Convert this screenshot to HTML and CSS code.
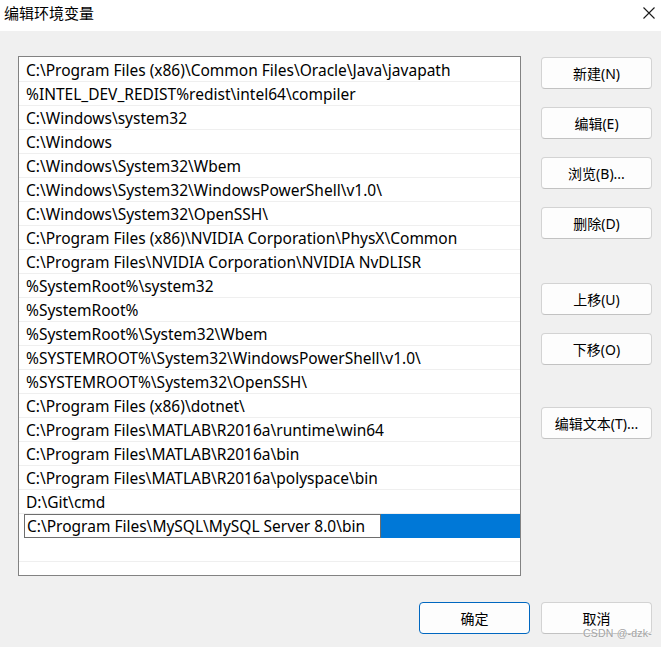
FILE: index.html
```html
<!DOCTYPE html>
<html lang="zh-CN">
<head>
    <meta charset="UTF-8">
    <meta name="viewport" content="width=device-width, initial-scale=1.0">
    <title>编辑环境变量</title>
    <link rel="stylesheet" href="styles.css">
</head>
<body>
    <div class="window">
        <div class="titlebar">
            <span class="title">编辑环境变量</span>
            <svg class="close" width="12" height="12" viewBox="0 0 12 12">
                <path d="M0.5 0.5 L11.5 11.5 M11.5 0.5 L0.5 11.5" stroke="#1a1a1a" stroke-width="1.1" fill="none"/>
            </svg>
        </div>
        <div class="dialog">
            <div class="main">
                <div class="listbox">
                    <div class="row">C:\Program Files (x86)\Common Files\Oracle\Java\javapath</div>
                    <div class="row">%INTEL_DEV_REDIST%redist\intel64\compiler</div>
                    <div class="row">C:\Windows\system32</div>
                    <div class="row">C:\Windows</div>
                    <div class="row">C:\Windows\System32\Wbem</div>
                    <div class="row">C:\Windows\System32\WindowsPowerShell\v1.0\</div>
                    <div class="row">C:\Windows\System32\OpenSSH\</div>
                    <div class="row">C:\Program Files (x86)\NVIDIA Corporation\PhysX\Common</div>
                    <div class="row">C:\Program Files\NVIDIA Corporation\NVIDIA NvDLISR</div>
                    <div class="row">%SystemRoot%\system32</div>
                    <div class="row">%SystemRoot%</div>
                    <div class="row">%SystemRoot%\System32\Wbem</div>
                    <div class="row">%SYSTEMROOT%\System32\WindowsPowerShell\v1.0\</div>
                    <div class="row">%SYSTEMROOT%\System32\OpenSSH\</div>
                    <div class="row">C:\Program Files (x86)\dotnet\</div>
                    <div class="row">C:\Program Files\MATLAB\R2016a\runtime\win64</div>
                    <div class="row">C:\Program Files\MATLAB\R2016a\bin</div>
                    <div class="row">C:\Program Files\MATLAB\R2016a\polyspace\bin</div>
                    <div class="row">D:\Git\cmd</div>
                    <div class="row selected">
                        <div class="edit">C:\Program Files\MySQL\MySQL Server 8.0\bin</div>
                        <div class="highlight"></div>
                    </div>
                    <div class="row"></div>
                </div>
                <div class="side-buttons">
                    <button class="btn">新建(N)</button>
                    <button class="btn">编辑(E)</button>
                    <button class="btn">浏览(B)...</button>
                    <button class="btn">删除(D)</button>
                    <button class="btn group-start">上移(U)</button>
                    <button class="btn">下移(O)</button>
                    <button class="btn text-edit">编辑文本(T)...</button>
                </div>
            </div>
            <div class="footer">
                <button class="btn default">确定</button>
                <button class="btn">取消</button>
            </div>
            <span class="watermark">CSDN @-dzk-</span>
        </div>
    </div>
</body>
</html>
```

FILE: styles.css
```css
* {
    box-sizing: border-box;
    margin: 0;
    padding: 0;
}

body {
    width: 661px;
    height: 647px;
    overflow: hidden;
    font-family: "Noto Sans", "Noto Sans CJK SC", sans-serif;
    color: #000;
}

.window {
    width: 661px;
    height: 647px;
    display: flex;
    flex-direction: column;
}

.titlebar {
    height: 31px;
    display: flex;
    justify-content: space-between;
    align-items: flex-start;
    background-color: #fff;
}

.title {
    padding: 3px 0 0 4px;
    font-family: "Noto Sans CJK SC", sans-serif;
    font-size: 15px;
    line-height: 20px;
}

.close {
    margin: 7px 6px 0 0;
}

.dialog {
    position: relative;
    flex: 1;
    padding: 25px 9px 0 18px;
    background-color: #f0f0f0;
}

.main {
    display: flex;
    gap: 20px;
}

.listbox {
    width: 504px;
    height: 520px;
    padding-top: 1px;
    background-color: #fff;
    border: 1px solid #828282;
}

.row {
    height: 24px;
    padding: 1px 0 0 7px;
    border-bottom: 1px solid #efefef;
    font-size: 15.5px;
    line-height: 22px;
    white-space: nowrap;
}

.row.selected {
    display: flex;
    padding: 0 0 0 5px;
    border-bottom: none;
}

.edit {
    width: 357px;
    height: 24px;
    padding: 1px 0 0 2px;
    border: 1px solid #6e6e6e;
    line-height: 20px;
    background-color: #fff;
}

.highlight {
    flex: 1;
    background-color: #0078d7;
}

.side-buttons {
    display: flex;
    flex-direction: column;
    gap: 18px;
    padding-top: 1px;
}

.btn {
    width: 111px;
    height: 32px;
    background-color: #fdfdfd;
    border: 1px solid #d3d3d3;
    border-bottom-color: #c2c2c2;
    border-radius: 4px;
    font-family: "Noto Sans", "Noto Sans CJK SC", sans-serif;
    font-size: 14px;
    color: #000;
}

.group-start { margin-top: 26px; }
.text-edit { margin-top: 24px; }

.footer {
    display: flex;
    justify-content: flex-end;
    gap: 11px;
    margin-top: 26px;
}

.btn.default {
    border: 1px solid #0067c0;
}

.watermark {
    position: absolute;
    left: 583px;
    top: 596px;
    font-family: "Liberation Sans", sans-serif;
    font-size: 10.5px;
    letter-spacing: 0.2px;
    color: #a3a3a3;
    text-shadow: 0 0 2px #fff;
}
```
